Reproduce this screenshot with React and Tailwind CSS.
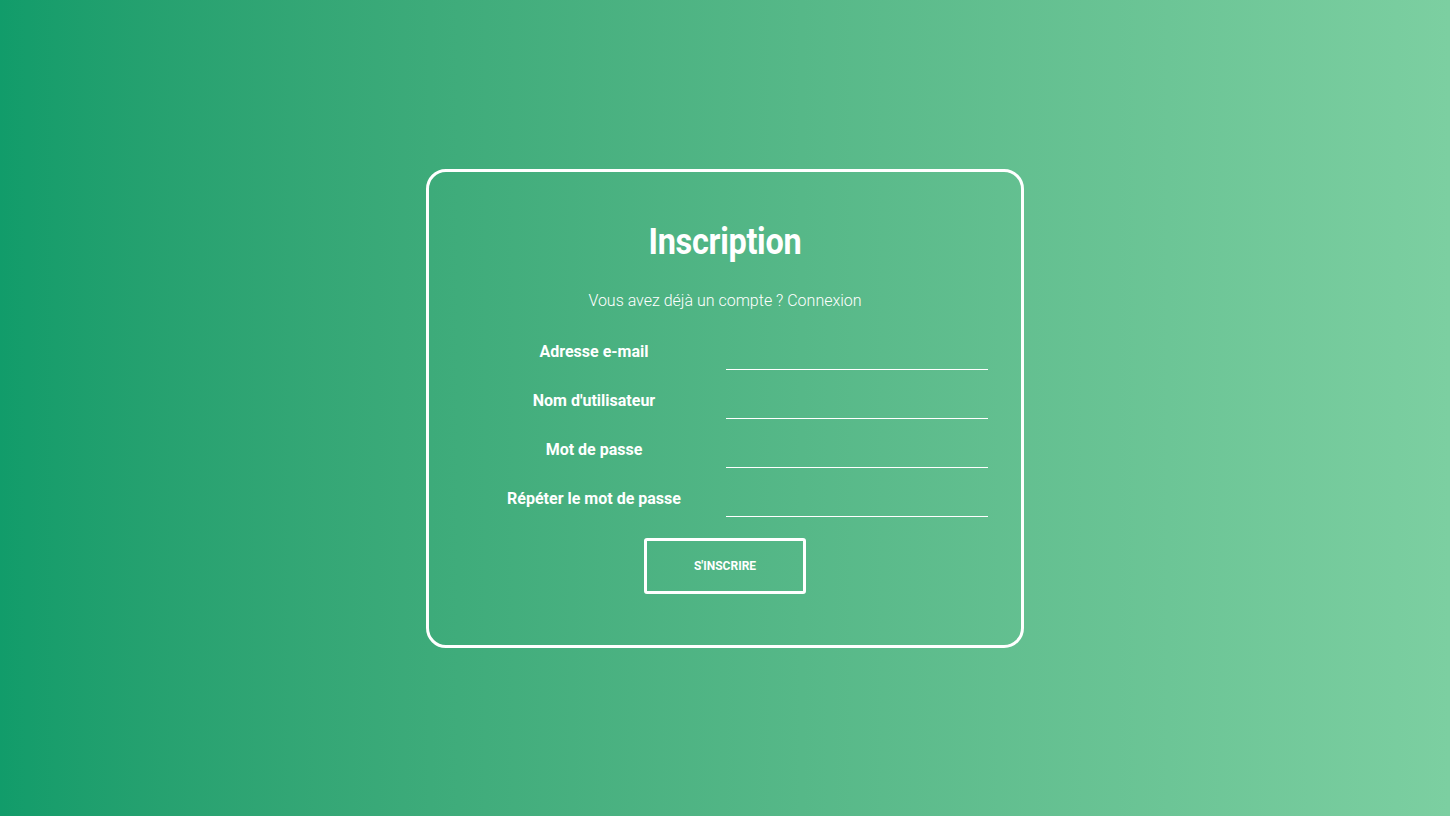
const fields = [
  { label: "Adresse e-mail", type: "email" },
  { label: "Nom d'utilisateur", type: "text" },
  { label: "Mot de passe", type: "password" },
  { label: "Répéter le mot de passe", type: "password" },
];

const App = () => {
  return (
    <div className="h-[816px] w-full bg-gradient-to-r from-[#119c6a] to-[#7ccfa1] flex items-center justify-center font-['Roboto',sans-serif] text-white">
      <div className="w-[598px] h-[479px] border-[3px] border-white rounded-[20px] flex flex-col items-center pt-[48px]">
        <h1 className="text-[36px] leading-[44px] font-bold scale-x-[0.9] tracking-[-0.3px]">
          Inscription
        </h1>
        <p className="mt-[28px] text-[16px] leading-[18px] font-light">
          Vous avez déjà un compte ? Connexion
        </p>
        <form className="mt-[18px] flex flex-col">
          {fields.map((f) => (
            <div key={f.label} className="flex items-center h-[49px]">
              <label className="w-[263px] text-center text-[16px] font-bold">
                {f.label}
              </label>
              <input
                type={f.type}
                className="w-[262px] h-[30px] mt-[6px] bg-transparent border-0 border-b border-white outline-none text-white text-[15px]"
              />
            </div>
          ))}
          <div className="flex justify-center mt-[14px]">
            <button
              type="button"
              className="w-[162px] h-[56px] border-[3px] border-white rounded-[3px] text-[12px] font-bold uppercase"
            >
              S'inscrire
            </button>
          </div>
        </form>
      </div>
    </div>
  );
};

export default App;
